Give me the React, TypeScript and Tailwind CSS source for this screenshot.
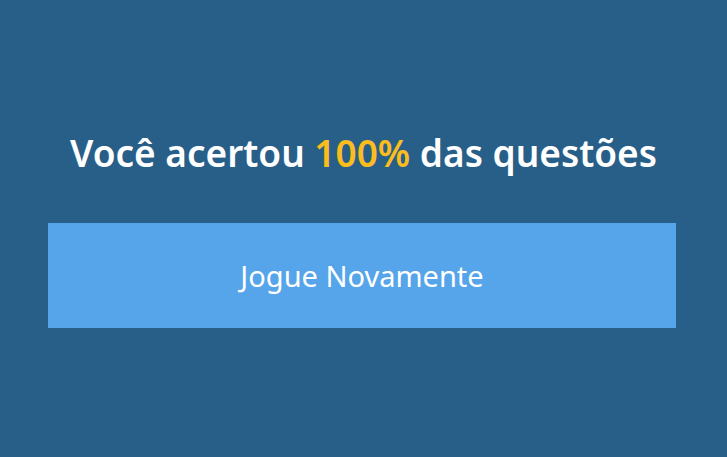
export default function App() {
  return (
    <div
      className="h-screen w-full bg-[#285f89] flex flex-col items-center justify-center"
      style={{ fontFamily: '"Noto Sans", "Open Sans", sans-serif' }}
    >
      <h1 className="text-[37px] leading-[48px] font-semibold text-white">
        Você acertou <span className="text-[#fbbd1e]">100%</span> das questões
      </h1>
      <button className="mt-[46px] mr-[3px] w-[628px] h-[105px] bg-[#56a5ea] text-white text-[29px]">
        Jogue Novamente
      </button>
    </div>
  );
}
